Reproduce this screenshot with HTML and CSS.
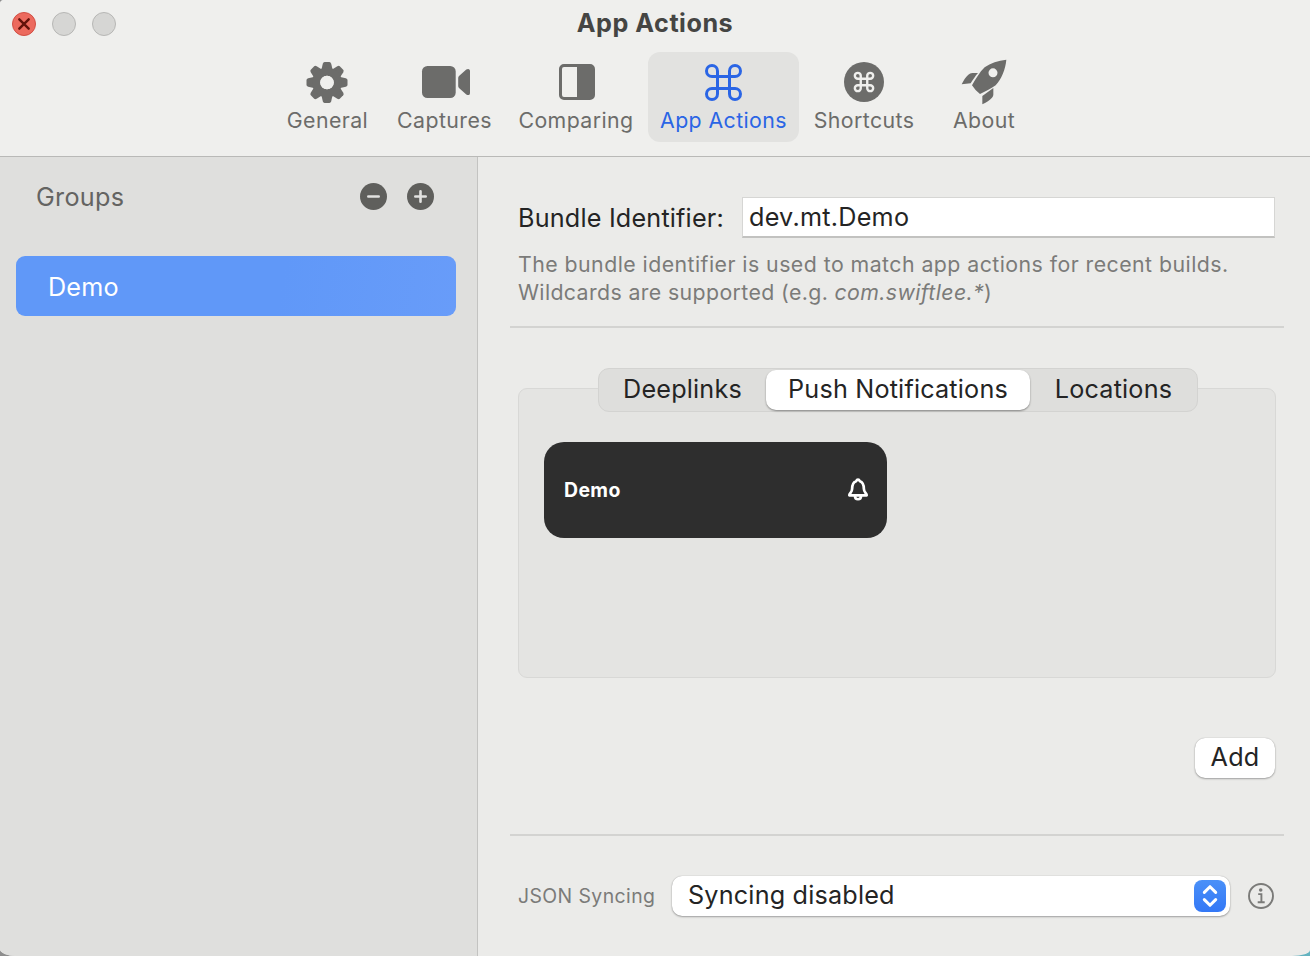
FILE: index.html
```html
<!DOCTYPE html>
<html lang="en">
<head>
<meta charset="utf-8">
<title>App Actions</title>
<link rel="stylesheet" href="styles.css">
</head>
<body>
<svg class="defs" width="0" height="0">
  <defs>
    <path id="command" d="M-6-11.5A5.5 5.5 0 1 0-11.5-6H11.5A5.5 5.5 0 1 0 6-11.5V11.5A5.5 5.5 0 1 0 11.5 6H-11.5A5.5 5.5 0 1 0-6 11.5Z"/>
    <path id="tooth" d="M-6-11L-4.2-18.8Q-3.7-20.5-2.4-20.5H2.4Q3.7-20.5 4.2-18.8L6-11Z"/>
  </defs>
</svg>
<div class="window">
  <header class="toolbar">
    <div class="titlebar">
      <div class="lights">
        <span class="light close"><svg viewBox="0 0 24 24"><path d="M7.3 7.3L16.7 16.7M16.7 7.3L7.3 16.7"/></svg></span>
        <span class="light"></span>
        <span class="light"></span>
      </div>
      <h1 class="title">App Actions</h1>
    </div>
    <nav class="tools">
      <div class="tool">
        <svg class="icon" viewBox="-27 -24.5 56 48">
          <use href="#tooth"/><use href="#tooth" transform="rotate(45)"/><use href="#tooth" transform="rotate(90)"/><use href="#tooth" transform="rotate(135)"/><use href="#tooth" transform="rotate(180)"/><use href="#tooth" transform="rotate(225)"/><use href="#tooth" transform="rotate(270)"/><use href="#tooth" transform="rotate(315)"/>
          <circle r="10.8" fill="none" stroke="currentColor" stroke-width="8"/>
          <circle r="6.8" fill="#efefed"/>
        </svg>
        <span>General</span>
      </div>
      <div class="tool">
        <svg class="icon" viewBox="417 58 56 48">
          <rect x="422" y="66" width="33.7" height="32" rx="5.5"/>
          <path d="M458.2 78Q458.2 76.8 459 76L466.3 69.6Q467.8 68.6 469 69.2Q470 69.6 470 71V93Q470 94.4 469 94.9Q467.8 95.4 466.3 94.4L459 88Q458.2 87.2 458.2 86Z"/>
        </svg>
        <span>Captures</span>
      </div>
      <div class="tool">
        <svg class="icon" viewBox="548 58 56 48">
          <rect x="560.5" y="65.5" width="33" height="33" rx="3.5" fill="none" stroke="currentColor" stroke-width="3"/>
          <path d="M577 65H592L594 67V97L592 99H577Z"/>
        </svg>
        <span>Comparing</span>
      </div>
      <div class="tool active">
        <svg class="icon" viewBox="-27.5 -24.5 56 48">
          <use href="#command" fill="none" stroke="currentColor" stroke-width="3"/>
        </svg>
        <span>App Actions</span>
      </div>
      <div class="tool">
        <svg class="icon" viewBox="-28 -24 56 48">
          <circle r="20"/>
          <use href="#command" transform="scale(.54)" fill="none" stroke="#efefed" stroke-width="4.400"/>
        </svg>
        <span>Shortcuts</span>
      </div>
      <div class="tool">
        <svg class="icon" viewBox="498 39 168 144">
          <path fill-rule="evenodd" d="M649 44C624 47 602 54 584 67C568 82 557 103 546 121Q555 136 570 147C586 139 602 132 617 121C635 101 646 74 649 44ZM609 70A13.500 13.500 0 1 1 609 97A13.500 13.500 0 1 1 609 70Z"/>
          <path d="M515 118C520 107 527 96 535 89Q540 84 547 84H564C556 93 549 104 542 115Z"/>
          <path d="M577 178V153L610 129V149Q610 154 606 158C598 166 588 173 577 178Z"/>
        </svg>
        <span>About</span>
      </div>
    </nav>
  </header>
  <div class="content">
    <aside class="sidebar">
      <div class="sidebar-head">
        <h2 class="groups">Groups</h2>
        <div class="round-buttons">
          <svg class="round" viewBox="-13.5 -13.5 27 27"><circle r="13.500"/><path d="M-5.200 0H5.200"/></svg>
          <svg class="round" viewBox="-13.5 -13.5 27 27"><circle r="13.500"/><path d="M-5.200 0H5.200M0-5.200V5.200"/></svg>
        </div>
      </div>
      <div class="group-row">Demo</div>
    </aside>
    <main class="main">
      <div class="field-row">
        <label class="label">Bundle Identifier:</label>
        <div class="input">dev.mt.Demo</div>
      </div>
      <p class="hint">The bundle identifier is used to match app actions for recent builds.<br><span class="hint-second">Wildcards are supported (e.g. <em>com.swiftlee.*</em>)</span></p>
      <div class="rule"></div>
      <section class="panel">
        <div class="tabs">
          <div class="tab">Deeplinks</div>
          <div class="tab selected">Push Notifications</div>
          <div class="tab">Locations</div>
        </div>
        <div class="card">
          <span>Demo</span>
          <svg class="bell" viewBox="0 0 22 24">
            <path d="M2.300 17.300C2.300 15.500 5 14.500 5.100 11C5.200 6.500 6.600 3.900 9.100 3.200Q9.800 1.700 11 1.700Q12.200 1.700 12.900 3.200C15.400 3.900 16.800 6.500 16.900 11C17 14.500 19.700 15.500 19.700 17.300Z"/>
            <path d="M8 18C8 22.300 14 22.300 14 18"/>
          </svg>
        </div>
      </section>
      <div class="actions"><div class="add">Add</div></div>
      <div class="rule"></div>
      <div class="sync">
        <span class="sync-label">JSON Syncing</span>
        <div class="select">
          <span>Syncing disabled</span>
          <svg class="stepper" viewBox="0 0 32 32"><path d="M10.300 12.400L16 6.700L21.700 12.400M10.300 19.600L16 25.300L21.700 19.600"/></svg>
        </div>
        <svg class="info" viewBox="-13 -13 26 26">
          <circle r="12" fill="none" stroke="currentColor" stroke-width="1.900"/>
          <circle cx="-.3" cy="-6" r="1.800"/>
          <path d="M-2.800-1.900H.4V6.200M-3.300 6.200H3.700" fill="none" stroke="currentColor" stroke-width="1.900"/>
        </svg>
      </div>
    </main>
  </div>
</div>
</body>
</html>
```

FILE: styles.css
```css
* { box-sizing: border-box; }
body {
  margin: 0;
  background: linear-gradient(90deg, #8d8d8d 50%, #64b3c0 50%);
  font-family: Inter, "Liberation Sans", sans-serif;
  font-size: 25.2px;
  letter-spacing: .19px;
  color: #242424;
  white-space: nowrap;
}
h1, h2, p { margin: 0; font-weight: 400; }
.defs { position: absolute; }
.window {
  width: 1310px;
  height: 956px;
  display: flex;
  flex-direction: column;
  overflow: hidden;
  border-radius: 4px 0 18px 16px / 4px 0 6px 7px;
  background: #ebebe9;
}

/* Toolbar */
.toolbar { height: 157px; flex: none; background: #efefed; border-bottom: 1px solid #b9b9b7; }
.titlebar { height: 52px; display: grid; grid-template-columns: 115px 1fr 127px; padding: 0 0 0 12px; }
.lights { display: flex; gap: 16px; padding-top: 12px; }
.light { width: 24px; height: 24px; border-radius: 50%; background: #d6d6d4; border: 1px solid #b7b7b5; flex: none; }
.close { background: #ec6a5e; border-color: #d24f44; }
.close svg { display: block; width: 24px; height: 24px; margin: -1px; fill: none; stroke: #63120b; stroke-width: 2.4; stroke-linecap: round; }
.title { text-align: center; font-size: 25.2px; letter-spacing: .5px; line-height: 30px; padding-top: 8px; font-weight: 700; color: #454543; }
.tools { display: grid; grid-template-columns: 115px 119px 144px 151px 130px 110px; margin-left: 270px; height: 90px; }
.tool { display: flex; flex-direction: column; align-items: center; padding-top: 6px; font-size: 21.3px; letter-spacing: .42px; line-height: 26px; color: #6c6c6a; }
.tool.active { background: #e2e2e0; border-radius: 12px; color: #2a65e5; }
.icon { width: 56px; height: 48px; fill: currentColor; display: block; margin-bottom: 1px; }

/* Sidebar */
.content { flex: 1; display: flex; }
.sidebar { width: 478px; background: #dfdfdd; border-right: 1px solid #c3c3c1; padding: 0 21px 0 16px; }
.sidebar-head { height: 99px; display: flex; justify-content: space-between; align-items: flex-start; padding: 25px 22px 0 20px; }
.groups { font-size: 25.2px; letter-spacing: .3px; line-height: 30px; color: #646462; }
.round-buttons { display: flex; gap: 20px; padding-top: 1px; }
.round { width: 27px; height: 27px; fill: #5f5f5c; stroke-linecap: round; }
.round path { stroke: #e2e2e0; stroke-width: 2.6; }
.group-row { height: 60px; border-radius: 9px; background: linear-gradient(100deg, #6098f8 60%, #689cf9); color: #fff; padding: 16px 32px; line-height: 30px; }

/* Main pane */
.main { flex: 1; padding: 40px 26px 0 32px; }
.field-row { display: flex; justify-content: space-between; height: 41px; padding: 0 9px 0 8px; }
.label { line-height: 42px; }
.input { width: 533px; height: 41px; background: #fff; border: 1px solid #d6d6d4; border-bottom: 2px solid #c2c2c0; padding-left: 6px; letter-spacing: .25px; line-height: 38px; }
.hint { margin: 12px 0 20px 8px; font-size: 21.3px; letter-spacing: .455px; line-height: 28px; color: #7b7b79; }
.hint-second { letter-spacing: .38px; }
.rule { height: 2px; background: #d3d3d1; }
.panel { margin: 60px 8px 0; height: 290px; border: 1px solid #d8d8d6; border-radius: 9px; background: #e4e4e2; padding: 0 25px; }
.tabs { display: grid; grid-template-columns: 167px 264px 167px; width: 600px; height: 44px; margin: -21px 0 30px 54px; background: #dededc; border: 1px solid #d3d3d1; border-radius: 11px; }
.tab { text-align: center; line-height: 38px; height: 40px; margin-top: 1px; }
.selected { background: #fff; border-radius: 10px; box-shadow: 0 1px 2px rgba(0,0,0,.4); }
.card { width: 343px; height: 96px; border-radius: 20px; background: #2e2e2e; color: #fff; display: flex; align-items: center; justify-content: space-between; padding: 0 18px 0 20px; font-size: 19.4px; letter-spacing: .4px; font-weight: 700; }
.bell { width: 22px; height: 24px; fill: none; stroke: #fff; stroke-width: 2.7; stroke-linejoin: round; }
.actions { display: flex; justify-content: flex-end; padding: 60px 9px 56px 0; }
.add { width: 80px; height: 40px; border-radius: 10px; background: #fff; text-align: center; line-height: 38px; box-shadow: 0 0 1px rgba(0,0,0,.3), 0 1px 2px rgba(0,0,0,.3); }
.sync { display: flex; align-items: center; padding: 40px 10px 0 8px; }
.sync-label { width: 154px; font-size: 19.4px; letter-spacing: .42px; color: #7b7b79; }
.select { width: 558px; height: 40px; border-radius: 10px; background: #fff; display: flex; justify-content: space-between; align-items: center; padding: 0 4px 0 16px; line-height: 38px; box-shadow: 0 0 1px rgba(0,0,0,.3), 0 1px 2px rgba(0,0,0,.3); }
.select span { height: 40px; }
.stepper { width: 32px; height: 32px; border-radius: 8px; background: linear-gradient(#4a90f8, #3478f6); fill: none; stroke: #fff; stroke-width: 3; stroke-linecap: round; stroke-linejoin: round; }
.info { width: 26px; height: 26px; margin-left: 18px; fill: currentColor; color: #7b7b79; }
```
